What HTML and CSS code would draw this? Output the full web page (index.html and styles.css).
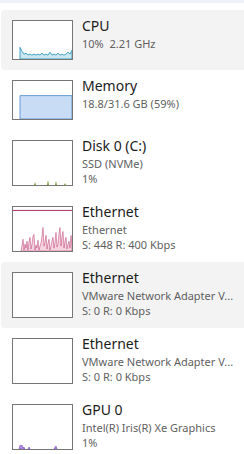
FILE: index.html
```html
<!DOCTYPE html>
<html lang="en">
<head>
<meta charset="utf-8">
<title>Performance</title>
<link rel="stylesheet" href="styles.css">
</head>
<body>
<div class="topstrip"></div>
<ul class="list">
  <li class="item selected">
    <div class="graph">
      <svg viewBox="0 0 59 39" preserveAspectRatio="none">
        <path class="cpu" d="M7,39 L7,27 L9,31 L11,34 L13,33 L15,35 L17,34 L19,35 L21,34 L23,35 L25,34 L27,35 L29,33 L31,35 L33,34 L35,35 L37,32 L39,35 L41,34 L43,35 L45,33 L47,35 L49,34 L51,35 L53,34 L55,32 L57,34 L59,30 L59,39 Z"/>
      </svg>
    </div>
    <div class="info">
      <div class="title">CPU</div>
      <div class="sub">10%&nbsp; 2.21 GHz</div>
    </div>
  </li>
  <li class="item">
    <div class="graph">
      <svg viewBox="0 0 59 39" preserveAspectRatio="none">
        <path class="mem" d="M7,39 L7,15 L59,15 L59,39 Z"/>
      </svg>
    </div>
    <div class="info">
      <div class="title">Memory</div>
      <div class="sub">18.8/31.6 GB (59%)</div>
    </div>
  </li>
  <li class="item">
    <div class="graph tall">
      <svg viewBox="0 0 59 45" preserveAspectRatio="none">
        <path class="disk" d="M21,45 L22,42 L23,45 Z M34,45 L35,40 L36,45 Z M42,45 L43,41 L44,45 Z M51,45 L52,43 L53,45 Z"/>
      </svg>
    </div>
    <div class="info">
      <div class="title">Disk 0 (C:)</div>
      <div class="sub">SSD (NVMe)</div>
      <div class="sub">1%</div>
    </div>
  </li>
  <li class="item">
    <div class="graph tall">
      <svg viewBox="0 0 59 45" preserveAspectRatio="none">
        <line class="net-top" x1="0" y1="3.5" x2="59" y2="3.5"/>
        <path class="net" d="M8,45 L9,40 L10,33 L11,44 L12,38 L13,42 L14,35 L15,44 L16,36 L17,31 L18,43 L19,38 L20,30 L21,28 L22,44 L23,39 L24,42 L25,34 L26,44 L27,40 L28,37 L29,30 L30,21 L31,40 L32,36 L33,29 L34,43 L35,37 L36,33 L37,44 L38,40 L39,35 L40,31 L41,42 L42,36 L43,26 L44,41 L45,38 L46,27 L47,21 L48,40 L49,30 L50,25 L51,42 L52,35 L53,31 L54,43 L55,38 L56,35 L57,42 L58,29 L59,40 L59,45 Z"/>
      </svg>
    </div>
    <div class="info">
      <div class="title">Ethernet</div>
      <div class="sub">Ethernet</div>
      <div class="sub">S: 448 R: 400 Kbps</div>
    </div>
  </li>
  <li class="item selected">
    <div class="graph tall"></div>
    <div class="info">
      <div class="title">Ethernet</div>
      <div class="sub">VMware Network Adapter V...</div>
      <div class="sub">S: 0 R: 0 Kbps</div>
    </div>
  </li>
  <li class="item">
    <div class="graph tall"></div>
    <div class="info">
      <div class="title">Ethernet</div>
      <div class="sub">VMware Network Adapter V...</div>
      <div class="sub">S: 0 R: 0 Kbps</div>
    </div>
  </li>
  <li class="item">
    <div class="graph tall">
      <svg viewBox="0 0 59 45" preserveAspectRatio="none">
        <path class="gpu" d="M6,45 L7,41 L8,42 L9,41 L10,44 L11,43 L12,45 Z M15,45 L16,43 L17,45 Z M41,45 L42,43 L43,42 L44,45 Z"/>
      </svg>
    </div>
    <div class="info">
      <div class="title">GPU 0</div>
      <div class="sub">Intel(R) Iris(R) Xe Graphics</div>
      <div class="sub">1%</div>
    </div>
  </li>
</ul>
</body>
</html>
```

FILE: styles.css
```css
html, body {
  margin: 0;
  padding: 0;
  background: #ffffff;
}

body {
  font-family: "Noto Sans", "Open Sans", sans-serif;
  width: 244px;
  overflow: hidden;
}

.topstrip {
  height: 3px;
  background: #eef2f8;
  margin-bottom: 7px;
}

.list {
  list-style: none;
  margin: 0;
  padding: 0;
}

.item {
  display: flex;
  align-items: flex-start;
  gap: 9px;
  padding: 10px 0 10px 11px;
  margin-left: 1px;
  border-radius: 4px 0 0 4px;
}

.item.selected {
  background: #f3f3f3;
}

.graph {
  box-sizing: border-box;
  flex: none;
  width: 61px;
  height: 40px;
  border: 1px solid #767676;
  background: #ffffff;
}

.graph.tall {
  height: 46px;
}

.graph svg {
  display: block;
  width: 100%;
  height: 100%;
}

.cpu {
  fill: #cbe7f0;
  stroke: #1b8db5;
  stroke-width: 0.8;
}

.mem {
  fill: #c8dcf6;
  stroke: #4a87cc;
  stroke-width: 0.8;
}

.disk {
  fill: #7aa33a;
}

.net-top {
  stroke: #b0305f;
  stroke-width: 1;
}

.net {
  fill: #f7d3e0;
  stroke: #b8356a;
  stroke-width: 0.5;
}

.gpu {
  fill: #b596e0;
  stroke: #7a45c4;
  stroke-width: 0.6;
}

.info {
  margin-top: -4px;
  min-width: 0;
  white-space: nowrap;
}

.title {
  font-size: 14px;
  line-height: 20px;
  color: #1b1b1b;
}

.sub {
  font-size: 11px;
  line-height: 15px;
  color: #5f5f5f;
}
```
